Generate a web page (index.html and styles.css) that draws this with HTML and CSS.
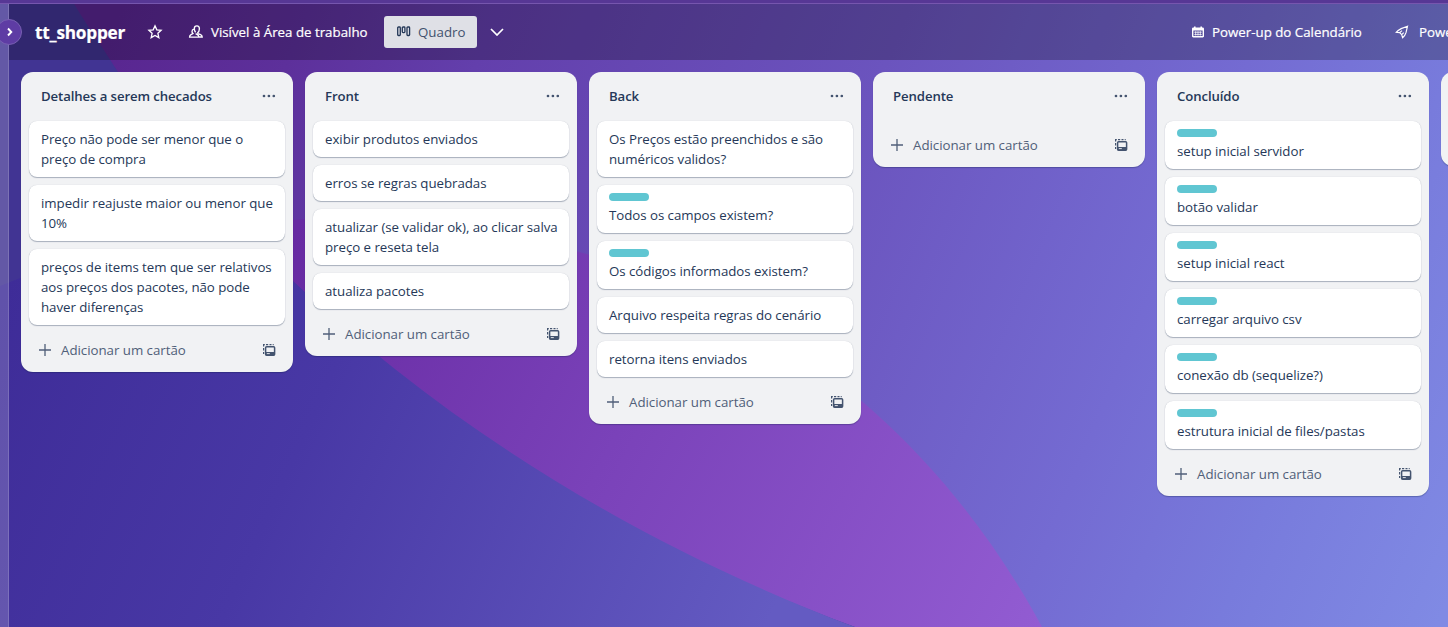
FILE: index.html
```
<!DOCTYPE html>
<html lang="pt-BR">
<head>
<meta charset="utf-8">
<title>tt_shopper</title>
<link rel="stylesheet" href="styles.css">
</head>
<body>
<svg class="defs" aria-hidden="true">
  <symbol id="dots" viewBox="0 0 14 4"><circle cx="2" cy="2" r="1.35"/><circle cx="6.9" cy="2" r="1.35"/><circle cx="11.8" cy="2" r="1.35"/></symbol>
  <symbol id="plus" viewBox="0 0 12 12"><path d="M6 0v12M0 6h12" fill="none" stroke="currentColor" stroke-width="1.3"/></symbol>
  <symbol id="template" viewBox="0 0 14 14"><path d="M1.6 11V9M1.6 7.5V5M1.6 3.500V1.600h1.200M4 1.600h2.200M7.500 1.600h2M10.700 1.600h1" fill="none" stroke="currentColor" stroke-width="1.200"/><rect x="3.600" y="3.800" width="9" height="8.400" rx="1" fill="none" stroke="currentColor" stroke-width="1.500"/><path d="M3.500 9h9v3.200h-9z"/><path d="M4.800 10.600h3" stroke="#f1f2f4" stroke-width=".9"/></symbol>
</svg>
<svg class="wallpaper" viewBox="0 0 1448 627" preserveAspectRatio="none" aria-hidden="true">
  <defs>
    <linearGradient id="sky" gradientUnits="userSpaceOnUse" x1="100" y1="60" x2="1440" y2="620"><stop offset="0" stop-color="#592690"/><stop offset=".12" stop-color="#5d309b"/><stop offset=".24" stop-color="#633fac"/><stop offset=".5" stop-color="#6b54be"/><stop offset=".73" stop-color="#746bd2"/><stop offset=".86" stop-color="#787bdc"/><stop offset="1" stop-color="#808ae4"/></linearGradient>
    <linearGradient id="magenta" gradientUnits="userSpaceOnUse" x1="290" y1="240" x2="1040" y2="627"><stop offset="0" stop-color="#672aa2"/><stop offset=".45" stop-color="#7a42b9"/><stop offset="1" stop-color="#925cd2"/></linearGradient>
    <linearGradient id="indigo" gradientUnits="userSpaceOnUse" x1="0" y1="300" x2="760" y2="640"><stop offset="0" stop-color="#3e2c98"/><stop offset=".4" stop-color="#4838a5"/><stop offset="1" stop-color="#645bc2"/></linearGradient>
    <clipPath id="dome"><path d="M0 286C200 203 400 203 583 253C790 310 946 449 1042 627H0Z"/></clipPath>
  </defs>
  <path fill="url(#sky)" d="M0 0h1448v627H0z"/>
  <path fill="url(#magenta)" clip-path="url(#dome)" d="M0 0h1448v627H0z"/>
  <path fill="#413493" d="M72 0C83 20 98 40 118 72C230 250 480 490 855 627H0V0Z"/>
  <path fill="url(#indigo)" clip-path="url(#dome)" d="M72 0C83 20 98 40 118 72C165 143 220 205 293 281C440 420 630 542 855 627H0V0Z"/>
</svg>
<div class="app">
  <div class="topline"></div>
  <div class="workspace">
    <aside class="rail"><button class="expand"><svg viewBox="0 0 8 10"><path d="m2 1.5 3.3 3.5L2 8.5"/></svg></button></aside>
    <main class="board">
      <header class="bar">
        <h1>tt_shopper</h1>
        <svg class="star line" viewBox="0 0 16 16"><path d="m8 1.8 1.8 4 4.3.5-3.2 3 .9 4.3L8 11.5l-3.8 2.1.9-4.3-3.2-3 4.3-.5z"/></svg>
        <div class="visibility"><svg class="people line" viewBox="0 0 16 16"><path d="M9.300 9.300c1.400-1 2.100-2.900 2.100-4.500 0-1.700-.9-2.900-2.500-2.900S6.300 3 6.300 4.700c0 1.300.5 2.500 1.300 3.600M9.300 9.300l3.300 1.300c1 .4 1.600 1.100 1.600 2.400h-3.400M6 5.200C4.700 5.500 4 6.400 4 7.500c0 .8.300 1.500.9 2.100L3 10.600c-1 .5-1.400 1.300-1.400 2.500h9.200c0-1.200-.5-2-1.400-2.500l-1.800-1"/></svg><span>Visível à Área de trabalho</span></div>
        <div class="view"><svg viewBox="0 0 16 13"><rect x="1.700" y="2" width="2.600" height="8.500" rx=".8"/><rect x="6.300" y="2" width="2.600" height="5.600" rx=".8"/><rect x="11" y="2" width="2.600" height="8.500" rx=".8"/></svg><span>Quadro</span></div>
        <svg class="chevron line" viewBox="0 0 14 8"><path d="m1 1 6 6 6-6"/></svg>
        <div class="powerups">
          <div class="calendar"><svg viewBox="0 0 12 12"><path fill-rule="evenodd" d="M2 0h1.600v1h4.800V0H10v1h.7c.8 0 1.300.6 1.300 1.300v7.500c0 .7-.5 1.200-1.300 1.200H1.300C.5 11 0 10.500 0 9.800V2.300C0 1.600.5 1 1.300 1H2zM1.400 3.900v5.700h9.200V3.900z"/><path class="grid" d="M2.300 5.700h7.400M2.300 8.100h7.400M3.700 4.800v4.200M6 4.800v4.200M8.300 4.800v4.200"/></svg><span>Power-up do Calendário</span></div>
          <div class="rocket"><svg class="line" viewBox="0 0 14 14"><path d="M12.500 1.300 6.200 3.600C4.200 4.600 2.300 5.800 1.200 7.300l3.500.3 2 2.100.9 3c1.800-1.300 2.800-3 3.400-5zM4.700 7.600l2.300-2M6.700 9.700l2-2.100"/></svg><span>Power-ups</span></div>
        </div>
      </header>
      <div class="lists">
        <section class="list">
          <div class="head"><h2>Detalhes a serem checados</h2><svg class="dots"><use href="#dots"/></svg></div>
          <div class="cards">
            <article>Preço não pode ser menor que o<br>preço de compra</article>
            <article>impedir reajuste maior ou menor que<br>10%</article>
            <article>preços de items tem que ser relativos<br>aos preços dos pacotes, não pode<br>haver diferenças</article>
          </div>
          <div class="foot"><svg class="plus"><use href="#plus"/></svg><span>Adicionar um cartão</span><svg class="template"><use href="#template"/></svg></div>
        </section>
        <section class="list">
          <div class="head"><h2>Front</h2><svg class="dots"><use href="#dots"/></svg></div>
          <div class="cards">
            <article>exibir produtos enviados</article>
            <article>erros se regras quebradas</article>
            <article>atualizar (se validar ok), ao clicar salva<br>preço e reseta tela</article>
            <article>atualiza pacotes</article>
          </div>
          <div class="foot"><svg class="plus"><use href="#plus"/></svg><span>Adicionar um cartão</span><svg class="template"><use href="#template"/></svg></div>
        </section>
        <section class="list">
          <div class="head"><h2>Back</h2><svg class="dots"><use href="#dots"/></svg></div>
          <div class="cards">
            <article>Os Preços estão preenchidos e são<br>numéricos validos?</article>
            <article><i class="label"></i>Todos os campos existem?</article>
            <article><i class="label"></i>Os códigos informados existem?</article>
            <article>Arquivo respeita regras do cenário</article>
            <article>retorna itens enviados</article>
          </div>
          <div class="foot"><svg class="plus"><use href="#plus"/></svg><span>Adicionar um cartão</span><svg class="template"><use href="#template"/></svg></div>
        </section>
        <section class="list">
          <div class="head"><h2>Pendente</h2><svg class="dots"><use href="#dots"/></svg></div>
          <div class="foot"><svg class="plus"><use href="#plus"/></svg><span>Adicionar um cartão</span><svg class="template"><use href="#template"/></svg></div>
        </section>
        <section class="list">
          <div class="head"><h2>Concluído</h2><svg class="dots"><use href="#dots"/></svg></div>
          <div class="cards">
            <article><i class="label"></i>setup inicial servidor</article>
            <article><i class="label"></i>botão validar</article>
            <article><i class="label"></i>setup inicial react</article>
            <article><i class="label"></i>carregar arquivo csv</article>
            <article><i class="label"></i>conexão db (sequelize?)</article>
            <article><i class="label"></i>estrutura inicial de files/pastas</article>
          </div>
          <div class="foot"><svg class="plus"><use href="#plus"/></svg><span>Adicionar um cartão</span><svg class="template"><use href="#template"/></svg></div>
        </section>
        <section class="list next"></section>
      </div>
    </main>
  </div>
</div>
</body>
</html>
```
FILE: styles.css
```
* { box-sizing: border-box; }
body { margin: 0; height: 627px; overflow: hidden; font-family: "Open Sans", "Noto Sans", sans-serif; font-size: 13.3px; line-height: 20px; color: #253858; }
h1, h2 { margin: 0; }
svg { flex: none; display: block; fill: currentColor; }
.defs { position: absolute; width: 0; height: 0; }
.wallpaper { position: absolute; inset: 0; width: 1448px; height: 627px; z-index: -1; }
.app { display: flex; flex-direction: column; width: 1448px; height: 627px; overflow: hidden; }
.topline { height: 4px; background: #573795; border-bottom: 1px solid #7656ae; flex: none; }
.workspace { display: flex; flex: 1; min-height: 0; }
.rail { position: relative; flex: none; width: 9px; background: rgba(255,255,255,.18); border-right: 1px solid rgba(255,255,255,.16); }
.expand { position: absolute; left: -4px; top: 15px; width: 26px; height: 26px; padding: 0; display: flex; align-items: center; justify-content: center; border: 1px solid #7960b3; border-radius: 50%; background: #5e3ca4; color: #fff; }
.expand svg { width: 8px; height: 10px; margin-left: 2px; fill: none; stroke: currentColor; stroke-width: 1.9; }
.board { flex: none; width: 1439px; overflow: hidden; }
.bar { display: flex; align-items: center; height: 56px; padding-left: 26px; color: #fff; background: rgba(0,0,0,.24); white-space: nowrap; -webkit-text-stroke: .2px currentColor; }
.bar h1 { flex: none; width: 91px; padding-top: 1px; font-size: 17.200px; line-height: 24px; font-weight: 700; letter-spacing: -.2px; }
.line { fill: none; stroke: currentColor; stroke-width: 1.35; }
.star { width: 16px; height: 16px; margin-left: 21px; }
.visibility { display: flex; flex: none; align-items: center; width: 182px; margin-left: 25px; }
.visibility svg { width: 16px; height: 16px; margin-right: 7px; }
.view { display: flex; flex: none; align-items: center; width: 93px; height: 32px; margin-left: 14px; padding-left: 12px; border-radius: 3px; background: #dfe0e6; color: #42526e; -webkit-text-stroke: 0; }
.view svg { width: 16px; height: 13px; margin: -2px 6px 0 0; fill: none; stroke: #253858; stroke-width: 1.300; }
.chevron { width: 14px; height: 8px; margin-left: 13px; stroke-width: 1.700; }
.powerups { display: flex; flex: none; margin-left: 688px; }
.calendar, .rocket { display: flex; align-items: center; }
.calendar { width: 203px; }
.calendar svg { width: 12px; height: 13px; margin-right: 8px; }
.grid { fill: none; stroke: currentColor; stroke-width: .8; }
.rocket svg { width: 14px; height: 14px; margin-right: 10px; stroke-width: 1.200; }
.lists { display: flex; align-items: flex-start; gap: 12px; padding: 12px; }
.list { flex: none; width: 272px; padding: 0 8px; border-radius: 12px; background: #f1f2f4; box-shadow: 0 1px 1px rgba(9,30,66,.3); }
.head { display: flex; align-items: center; justify-content: space-between; height: 49px; padding: 0 9px 1px 12px; }
.head h2 { font-size: 13.200px; line-height: 20px; font-weight: 600; letter-spacing: -.1px; }
.dots { width: 14px; height: 4px; color: #44546f; }
.cards { display: flex; flex-direction: column; gap: 8px; margin-bottom: 1px; }
article { padding: 8px 0 8px 12px; border-radius: 8px; background: #fff; box-shadow: 0 1px 1px rgba(9,30,66,.3), 0 0 1px rgba(9,30,66,.2); white-space: nowrap; letter-spacing: -.05px; }
.label { display: block; width: 40px; height: 8px; margin-bottom: 4px; border-radius: 4px; background: #60c6d2; }
.foot { display: flex; align-items: center; height: 46px; padding: 2px 9px 0 10px; color: #505f79; letter-spacing: -.03px; }
.plus { width: 12px; height: 12px; margin-right: 10px; }
.template { width: 14px; height: 14px; margin-left: auto; color: #44546f; }
.next { height: 94px; }
```
